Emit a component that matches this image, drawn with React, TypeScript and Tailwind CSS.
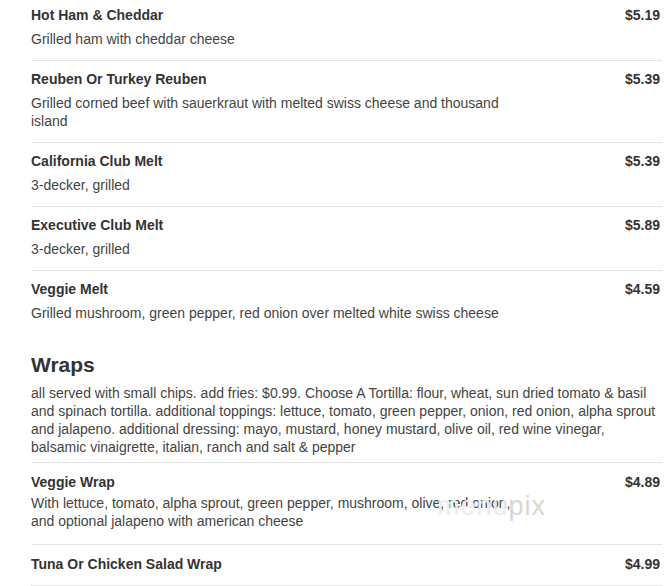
type Item = { name: string; desc: string; price: string };

const MELTS: Item[] = [
  { name: "Hot Ham & Cheddar", desc: "Grilled ham with cheddar cheese", price: "$5.19" },
  {
    name: "Reuben Or Turkey Reuben",
    desc: "Grilled corned beef with sauerkraut with melted swiss cheese and thousand island",
    price: "$5.39",
  },
  { name: "California Club Melt", desc: "3-decker, grilled", price: "$5.39" },
  { name: "Executive Club Melt", desc: "3-decker, grilled", price: "$5.89" },
  {
    name: "Veggie Melt",
    desc: "Grilled mushroom, green pepper, red onion over melted white swiss cheese",
    price: "$4.59",
  },
];

const WRAPS: Item[] = [
  {
    name: "Veggie Wrap",
    desc: "With lettuce, tomato, alpha sprout, green pepper, mushroom, olive, red onion, and optional jalapeno with american cheese",
    price: "$4.89",
  },
  { name: "Tuna Or Chicken Salad Wrap", desc: "", price: "$4.99" },
];

function MeltRow({ item, first, last }: { item: Item; first: boolean; last: boolean }) {
  return (
    <div
      className={`flex justify-between ${first ? "pt-0" : "pt-[9px]"} ${
        last ? "pb-0" : "pb-[12px] border-b border-[#e6e6e6]"
      }`}
    >
      <div className="w-[480px]">
        <h3 className="text-[14px] leading-[18px] font-bold text-[#333]">{item.name}</h3>
        <p className="mt-[6px] text-[14px] leading-[18px] text-[#444]">{item.desc}</p>
      </div>
      <span className="pr-[2px] text-[14px] leading-[18px] font-bold text-[#333]">{item.price}</span>
    </div>
  );
}

function WrapRow({ item }: { item: Item }) {
  return (
    <div className="flex justify-between pt-[10px] pb-[12px] border-b border-[#e6e6e6]">
      <div className="w-[480px]">
        <h3 className="text-[14px] leading-[18px] font-bold text-[#333]">{item.name}</h3>
        {item.desc && (
          <p className="mt-[3px] mb-[2px] text-[14px] leading-[18px] text-[#444]">{item.desc}</p>
        )}
      </div>
      <span className="pr-[2px] text-[14px] leading-[18px] font-bold text-[#333]">{item.price}</span>
    </div>
  );
}

export default function App() {
  return (
    <div
      className="relative h-[586px] w-[666px] overflow-hidden bg-white pl-[31px] pr-[4px] pt-[6px]"
      style={{ fontFamily: '"Liberation Sans", Arial, sans-serif' }}
    >
      {/* Melts */}
      <div className="flex flex-col">
        {MELTS.map((m, i) => (
          <MeltRow key={m.name} item={m} first={i === 0} last={i === MELTS.length - 1} />
        ))}
      </div>

      {/* Wraps */}
      <h2 className="mt-[30px] text-[21px] leading-[25px] font-bold text-[#333]">Wraps</h2>
      <p className="mt-[7px] pb-[6px] border-b border-[#e6e6e6] text-[14px] leading-[18px] text-[#444]">
        all served with small chips. add fries: $0.99. Choose A Tortilla: flour, wheat, sun dried tomato &amp; basil
        and spinach tortilla. additional toppings: lettuce, tomato, green pepper, onion, red onion, alpha sprout
        and jalapeno. additional dressing: mayo, mustard, honey mustard, olive oil, red wine vinegar,
        balsamic vinaigrette, italian, ranch and salt &amp; pepper
      </p>
      <div className="flex flex-col">
        {WRAPS.map((w) => (
          <WrapRow key={w.name} item={w} />
        ))}
      </div>

      {/* watermark */}
      <div className="pointer-events-none absolute left-[437px] top-[486px] text-[27px] font-light tracking-[1px] text-[#ececec]">
        menu<span className="text-[#d6d6d6]">pix</span>
      </div>
    </div>
  );
}
